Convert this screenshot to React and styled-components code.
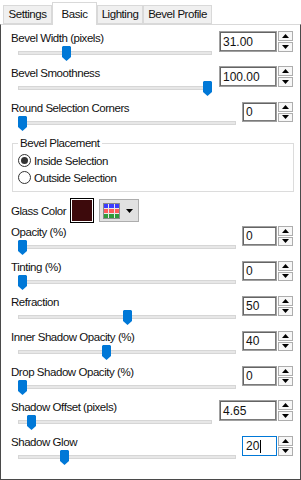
import React from 'react';
import styled, { createGlobalStyle } from 'styled-components';

const GlobalStyle = createGlobalStyle`
body {
  margin: 0;
  background: #fff;
  font-family: "Liberation Sans", Arial, sans-serif;
  font-size: 11.5px;
  letter-spacing: -0.45px;
  color: #111;
}
`;

const Window = styled.div`
width: 301px;
height: 480px;
display: flex;
flex-direction: column;
box-sizing: border-box;
`;

const TabStrip = styled.div`
height: 24px;
flex: none;
display: flex;
align-items: flex-end;
padding-left: 3px;
`;

const Tab = styled.div`
position: relative;
z-index: ${p => (p.$active ? 1 : 0)};
box-sizing: border-box;
width: ${p => p.$w}px;
height: ${p => (p.$active ? 23 : 19)}px;
margin-bottom: ${p => (p.$active ? -1 : 0)}px;
display: flex;
align-items: center;
justify-content: center;
background: ${p => (p.$active ? '#fff' : '#f0f0f0')};
border: 1px solid #d9d9d9;
border-bottom: ${p => (p.$active ? 'none' : '1px solid #d9d9d9')};
padding-bottom: 1px;
white-space: nowrap;
`;

const Panel = styled.div`
flex: 1;
display: flex;
flex-direction: column;
border-top: 1px solid #d9d9d9;
border-left: 1px solid #4a4a4a;
border-right: 1px solid #4a4a4a;
border-bottom: 1px solid #4a4a4a;
padding: 6px 7px 0 10px;
`;

const Row = styled.div`
height: 35px;
flex: none;
display: flex;
justify-content: space-between;
align-items: flex-start;
`;

const LeftCol = styled.div`
display: flex;
flex-direction: column;
`;

const Label = styled.div`
line-height: 14px;
height: 14px;
white-space: nowrap;
`;

const SliderBox = styled.div`
position: relative;
margin: 1px 0 0 7px;
width: ${p => p.$w}px;
height: 15px;
`;

const Track = styled.div`
margin-top: 5px;
height: 4px;
box-sizing: border-box;
background: #e7e7e7;
border: 1px solid #d6d6d6;
`;

const ThumbWrap = styled.div`
position: absolute;
top: 0;
width: 9px;
height: 15px;
`;

const Spin = styled.div`
display: flex;
gap: 1px;
margin-top: ${p => (p.$wide ? 0 : 1)}px;
height: ${p => (p.$wide ? 21 : 20)}px;
`;

const Field = styled.div`
box-sizing: border-box;
width: ${p => (p.$wide ? 58 : 35)}px;
height: 100%;
display: flex;
align-items: center;
padding-left: 3px;
border: 1px solid ${p => (p.$focus ? '#0078d7' : '#a0a0a0')};
box-shadow: ${p => (p.$focus ? 'none' : 'inset 1px 1px 0 #646464, inset -1px -1px 0 #7a7a7a')};
background: #fff;
letter-spacing: 0;
font-size: 12px;
`;

const Caret = styled.span`
display: inline-block;
width: 1px;
height: 13px;
background: #000;
margin-left: 1px;
`;

const SpinButtons = styled.div`
width: 15px;
display: flex;
flex-direction: column;
gap: 1px;
`;

const SpinBtn = styled.div`
flex: 1;
box-sizing: border-box;
display: flex;
align-items: center;
justify-content: center;
background: #f7f7f7;
border: 1px solid #adadad;
`;

const GroupBox = styled.fieldset`
margin: 0 -1px 0 1px;
padding: 2px 0 5px 5px;
border: 1px solid #dcdcdc;
min-width: 0;
flex: none;
`;

const Legend = styled.legend`
padding: 0 2px;
line-height: 14px;
`;

const RadioRow = styled.div`
height: 17px;
display: flex;
align-items: center;
gap: 3px;
`;

const RadioCircle = styled.span`
box-sizing: border-box;
width: 13px;
height: 13px;
border-radius: 50%;
border: 1px solid #333;
background: #fff;
display: flex;
align-items: center;
justify-content: center;
&::after {
  content: '';
  width: 7px;
  height: 7px;
  border-radius: 50%;
  background: ${p => (p.$checked ? '#333' : 'transparent')};
}
`;

const GlassRow = styled.div`
margin-top: 4px;
height: 29px;
flex: none;
display: flex;
align-items: center;
`;

const GlassLabel = styled.div`
width: 59px;
white-space: nowrap;
`;

const Swatch = styled.div`
box-sizing: border-box;
width: 24px;
height: 25px;
border: 1px solid #000;
box-shadow: inset 0 0 0 1px #fff;
background: #3d0a0c;
`;

const PickerButton = styled.div`
box-sizing: border-box;
margin-left: 5px;
width: 40px;
height: 23px;
display: flex;
align-items: center;
padding-left: 3px;
gap: 6px;
background: #e1e1e1;
border: 1px solid #adadad;
`;

const ColorGrid = styled.div`
box-sizing: border-box;
width: 17px;
height: 16px;
display: grid;
grid-template-columns: repeat(3, 1fr);
grid-template-rows: repeat(3, 1fr);
gap: 1px;
background: #e8e8e8;
border: 1px solid #8a8a8a;
`;

const Cell = styled.span`
background: ${p => p.$c};
`;

const Tri = ({ down }) => (
  <svg width="7" height="4" viewBox="0 0 7 4">
    <polygon points={down ? '0,0 7,0 3.5,4' : '0,4 7,4 3.5,0'} fill="#000" />
  </svg>
);

const Thumb = ({ left }) => (
  <ThumbWrap style={{ left }}>
    <svg width="9" height="15" viewBox="0 0 9 15">
      <polygon points="0,1 1,0 8,0 9,1 9,11 4.5,15 0,11" fill="#0078d7" />
    </svg>
  </ThumbWrap>
);

function SliderRow({ label, value, frac, wide, focus }) {
  const len = wide ? 194 : 218;
  return (
    <Row>
      <LeftCol>
        <Label>{label}</Label>
        <SliderBox $w={len}>
          <Track />
          <Thumb left={Math.round(frac * (len - 9))} />
        </SliderBox>
      </LeftCol>
      <Spin $wide={wide}>
        <Field $wide={wide} $focus={focus}>
          {value}
          {focus && <Caret />}
        </Field>
        <SpinButtons>
          <SpinBtn><Tri /></SpinBtn>
          <SpinBtn><Tri down /></SpinBtn>
        </SpinButtons>
      </Spin>
    </Row>
  );
}

const tabs = [
  { name: 'Settings', w: 49 },
  { name: 'Basic', w: 45, active: true },
  { name: 'Lighting', w: 46 },
  { name: 'Bevel Profile', w: 69 },
];

const lowerRows = [
  { label: 'Opacity (%)', value: '0', frac: 0 },
  { label: 'Tinting (%)', value: '0', frac: 0 },
  { label: 'Refraction', value: '50', frac: 0.5 },
  { label: 'Inner Shadow Opacity (%)', value: '40', frac: 0.4 },
  { label: 'Drop Shadow Opacity (%)', value: '0', frac: 0 },
  { label: 'Shadow Offset (pixels)', value: '4.65', frac: 0.046, wide: true },
  { label: 'Shadow Glow', value: '20', frac: 0.2, focus: true },
];

const gridColors = ['#3c3cff', '#3c3cff', '#3c3cff', '#ff5a5a', '#ff5a5a', '#ff5a5a', '#2f9a3a', '#2f9a3a', '#2f9a3a'];

export default function App() {
  return (
    <Window>
      <GlobalStyle />
      <TabStrip>
        {tabs.map(t => (
          <Tab key={t.name} $w={t.w} $active={t.active}>{t.name}</Tab>
        ))}
      </TabStrip>
      <Panel>
        <SliderRow label="Bevel Width (pixels)" value="31.00" frac={0.237} wide />
        <SliderRow label="Bevel Smoothness" value="100.00" frac={1} wide />
        <SliderRow label="Round Selection Corners" value="0" frac={0} />
        <GroupBox>
          <Legend>Bevel Placement</Legend>
          <RadioRow><RadioCircle $checked />Inside Selection</RadioRow>
          <RadioRow><RadioCircle />Outside Selection</RadioRow>
        </GroupBox>
        <GlassRow>
          <GlassLabel>Glass Color</GlassLabel>
          <Swatch />
          <PickerButton>
            <ColorGrid>
              {gridColors.map((c, i) => <Cell key={i} $c={c} />)}
            </ColorGrid>
            <Tri down />
          </PickerButton>
        </GlassRow>
        {lowerRows.map(r => (
          <SliderRow key={r.label} {...r} />
        ))}
      </Panel>
    </Window>
  );
}
